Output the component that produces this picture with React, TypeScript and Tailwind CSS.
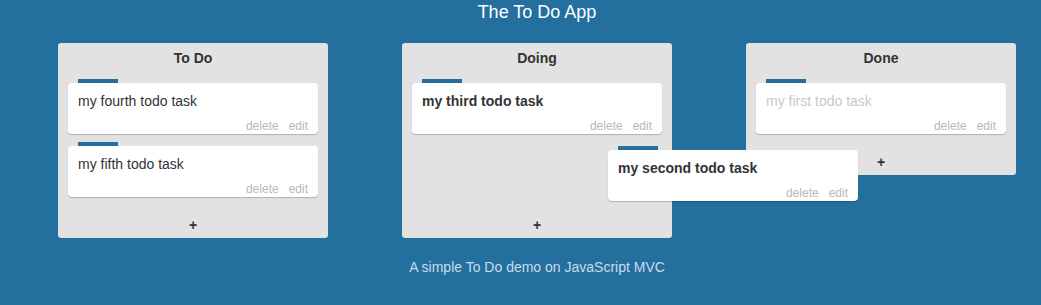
import React from 'react'

type Task = { id: number; text: string; bold?: boolean; done?: boolean }

const columns: { title: string; tasks: Task[]; placeholder?: boolean }[] = [
  {
    title: 'To Do',
    tasks: [
      { id: 4, text: 'my fourth todo task' },
      { id: 5, text: 'my fifth todo task' },
    ],
  },
  {
    title: 'Doing',
    tasks: [{ id: 3, text: 'my third todo task', bold: true }],
    placeholder: true,
  },
  {
    title: 'Done',
    tasks: [{ id: 1, text: 'my first todo task', done: true }],
  },
]

function TaskCard({ task }: { task: Task }) {
  return (
    <div>
      <div className="ml-[10px] h-[4px] w-[40px] bg-[#23709f]" />
      <div className="h-[51px] rounded-[4px] bg-white shadow-[0_1px_1px_rgba(0,0,0,0.22)] flex flex-col">
        <div
          className={`pl-[10px] pt-[8px] text-[14px] leading-[20px] ${
            task.done ? 'text-[#c8c8c8]' : 'text-[#333]'
          } ${task.bold ? 'font-bold' : ''}`}
        >
          {task.text}
        </div>
        <div className="mt-auto mb-[1px] flex justify-end gap-[10px] pr-[10px] text-[12px] leading-[14px] text-[#b8b8b8]">
          <span>delete</span>
          <span>edit</span>
        </div>
      </div>
    </div>
  )
}

export default function App() {
  return (
    <div
      className="min-h-screen bg-[#23709f]"
      style={{ fontFamily: '"Liberation Sans", Arial, sans-serif' }}
    >
      <div className="ml-[58px] w-[958px]">
        <h1 className="h-[24px] text-center text-[18px] leading-[24px] text-white">
          The To Do App
        </h1>

        <div className="mt-[19px] flex items-start gap-[74px]">
          {columns.map((col) => (
            <div
              key={col.title}
              className={`relative w-[270px] rounded-[3px] bg-[#e2e2e2] ${col.placeholder ? 'z-10' : ''}`}
            >
              <div className="h-[36px] pt-[5px] text-center text-[14px] font-bold leading-[20px] text-[#333]">
                {col.title}
              </div>
              <div className="flex flex-col gap-[8px] px-[10px]">
                {col.tasks.map((t) => (
                  <TaskCard key={t.id} task={t} />
                ))}
                {col.placeholder && <div className="h-[55px]" />}
              </div>
              <div className="h-[41px] pt-[20px] text-center text-[14px] font-bold leading-[16px] text-[#333]">
                +
              </div>

              {/* task being dragged */}
              {col.placeholder && (
                <div className="absolute left-[206px] top-[103px] w-[250px]">
                  <TaskCard task={{ id: 2, text: 'my second todo task', bold: true }} />
                </div>
              )}
            </div>
          ))}
        </div>

        <p className="mt-[19px] text-center text-[14px] leading-[20px] text-[#c9dcea]">
          A simple To Do demo on JavaScript MVC
        </p>
      </div>
    </div>
  )
}
